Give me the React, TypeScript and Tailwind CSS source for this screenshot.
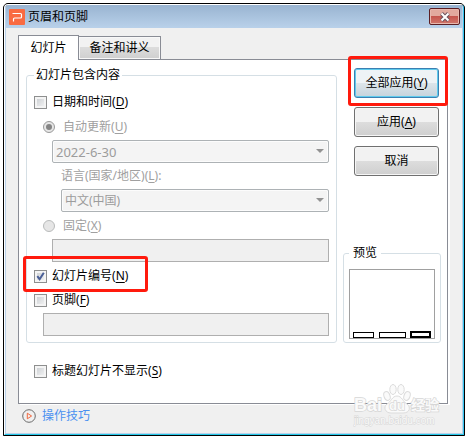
import { useState } from "react";
import type { ReactNode } from "react";

const FONT = "font-['Noto_Sans','Noto_Sans_CJK_SC',sans-serif]";

const DATE_FORMATS = ["2022-6-30"];
const LANGUAGES = ["中文(中国)"];

function Caption({ text, hotkey, tail = "" }: { text: string; hotkey: string; tail?: string }) {
  return (
    <span className="whitespace-nowrap">
      {text}(<span className="underline underline-offset-2">{hotkey}</span>){tail}
    </span>
  );
}

function CheckRow({ checked, onChange, children }: { checked: boolean; onChange: (v: boolean) => void; children: ReactNode }) {
  return (
    <label className="flex h-4 items-center gap-[5px]">
      <span className="relative flex">
        <input
          type="checkbox"
          checked={checked}
          onChange={e => onChange(e.target.checked)}
          className="h-[13px] w-[13px] appearance-none border border-[#8e8f8f] bg-linear-to-br from-[#c6cace] to-[#f8f8f8] shadow-[inset_0_0_0_2px_#f4f4f4]"
        />
        {checked && (
          <svg viewBox="0 0 13 13" className="pointer-events-none absolute inset-0 h-[13px] w-[13px]">
            <path d="M3.3 6.2 L5.6 9.2 L9.8 2.8" fill="none" stroke="#4a5f97" strokeWidth="2" />
          </svg>
        )}
      </span>
      {children}
    </label>
  );
}

function RadioRow({ value, checked, children }: { value: string; checked: boolean; children: ReactNode }) {
  return (
    <label className="ml-[9px] flex h-4 items-center gap-2 text-[#a0a0a0]">
      <span className="relative flex">
        <input
          type="radio"
          name="dateMode"
          value={value}
          defaultChecked={checked}
          disabled
          className="h-3 w-3 appearance-none rounded-full border border-[#b9bbbb] bg-[#e6e6e6] checked:border-[#9a9a9a]"
        />
        {checked && <span className="absolute inset-[3px] rounded-full bg-[#858585]" />}
      </span>
      {children}
    </label>
  );
}

function DropDown({ id, label, options, textSize }: { id: string; label?: string; options: string[]; textSize: string }) {
  return (
    <div className="relative">
      <select
        id={id}
        aria-label={label}
        disabled
        className={`block h-[23px] w-full appearance-none rounded-xs border border-[#adb2b5] bg-[#f4f4f4] px-[3px] leading-5 text-[#9c9c9c] opacity-100 shadow-[inset_0_0_0_1px_#fcfcfc] ${textSize}`}
      >
        {options.map(o => <option key={o}>{o}</option>)}
      </select>
      <svg viewBox="0 0 8 4" className="pointer-events-none absolute top-[9px] right-[5px] h-1 w-2">
        <path d="M0 0 H8 L4 4 Z" fill="#929292" />
      </svg>
    </div>
  );
}

function PushButton({ primary, children }: { primary?: boolean; children: ReactNode }) {
  return (
    <button
      type="button"
      className={`block h-[30px] w-full rounded-[3px] border text-xs ${
        primary
          ? "border-[#3c7fb1] bg-linear-to-b from-[#eef3f6] from-50% via-[#dde5ea] via-50% to-[#c5d3dc] shadow-[inset_0_0_0_1px_#5fcbed]"
          : "border-[#707070] bg-linear-to-b from-[#f2f2f2] from-50% via-[#dddddd] via-50% to-[#cfcfcf] shadow-[inset_0_0_0_1px_#f6f6f6]"
      }`}
    >
      {children}
    </button>
  );
}

function TitleBar() {
  return (
    <header className="flex h-[23px] items-center gap-[3px] bg-linear-to-b from-[#99b4d1] to-[#b9d1ea] pr-[2px] pl-[3px]">
      <svg viewBox="0 0 16 16" className="h-4 w-4">
        <rect width="16" height="16" rx="1" fill="#f96b42" />
        <path d="M3.5 4.5 H11.5 Q12.5 4.5 12.5 5.5 V8 Q12.5 9 11.5 9 H5.5 Q4.5 9 4.5 10 V12.5" fill="none" stroke="#fff" strokeWidth="1.2" />
      </svg>
      <h1 className="text-xs">页眉和页脚</h1>
      <button
        type="button"
        aria-label="关闭"
        className="ml-auto flex h-[17px] w-[31px] items-center justify-center rounded-xs border border-[#5c1f24] bg-linear-to-b from-[#e2a99e] from-45% via-[#c4524a] via-45% to-[#d0776d] shadow-[inset_0_0_0_1px_#e8b8ae]"
      >
        <svg viewBox="0 0 12 10" className="h-2.5 w-3">
          <path d="M2.5 1.5 L9.5 8.5 M9.5 1.5 L2.5 8.5" stroke="#6e5560" strokeWidth="4" />
          <path d="M2.5 1.5 L9.5 8.5 M9.5 1.5 L2.5 8.5" stroke="#fff" strokeWidth="2" />
        </svg>
      </button>
    </header>
  );
}

function Preview() {
  return (
    <fieldset className="min-w-0 rounded-[3px] border border-[#d5dfe5] px-[5px] pb-[3px]">
      <legend className="px-1 text-xs leading-4">预览</legend>
      <div className="mt-2 flex h-[70px] items-end justify-between border border-[#a0a0a0] px-[3px]">
        <div className="h-1.5 w-[21px] border border-black" />
        <div className="h-1.5 w-[27px] border border-black" />
        <div className="h-[7px] w-[21px] border-2 border-black" />
      </div>
    </fieldset>
  );
}

function Watermark() {
  return (
    <div aria-hidden="true" className="pointer-events-none absolute right-[19px] bottom-[6px] w-[91px]">
      <svg viewBox="0 0 91 45" className="block w-full">
        <g fill="#fafafa" stroke="#dcdcdc" strokeWidth="1">
          <ellipse cx="34" cy="13" rx="3" ry="4.5" transform="rotate(-20 34 13)" />
          <ellipse cx="40" cy="6.5" rx="3.2" ry="5" />
          <ellipse cx="48" cy="6.5" rx="3.2" ry="5" />
          <ellipse cx="54" cy="13" rx="3" ry="4.5" transform="rotate(20 54 13)" />
          <path d="M44 13 C39 13 38 19 34 21 C30 24 32 30 38 30 H50 C57 30 58 24 54 21 C50 19 49 13 44 13 Z" />
        </g>
        <g fill="#fafafa" stroke="#d6d6d6" strokeWidth="1.4" paintOrder="stroke" fontFamily="Liberation Sans, Noto Sans CJK SC, sans-serif">
          <text x="1" y="28" fontSize="18" fontWeight="bold">Bai</text>
          <text x="36" y="27" fontSize="13" fontWeight="bold">du</text>
          <text x="58" y="27" fontSize="14" fontWeight="bold">经验</text>
          <text x="1" y="41" fontSize="10" strokeWidth="1">jingyan.baidu.com</text>
        </g>
      </svg>
    </div>
  );
}

export default function App() {
  const [dateTime, setDateTime] = useState(false);
  const [slideNumber, setSlideNumber] = useState(true);
  const [footer, setFooter] = useState(false);
  const [hideOnTitle, setHideOnTitle] = useState(false);

  return (
    <div className={`bg-white pt-[3px] pr-[5px] pb-[2px] pl-[3px] text-xs leading-4 text-black ${FONT}`}>
      <div className="rounded-t-[5px] border border-black bg-black">
        <div className="relative overflow-hidden rounded-t-sm border border-t-white border-r-[#35c5ef] border-b-[#24c8e8] border-l-white">
          <div className="border-x border-b border-[#b9d1ea] bg-[#f0f0f0]">
            <TitleBar />

            <main className="px-3 pt-[7px]">
              <div role="tablist" className="flex items-end">
                <button type="button" role="tab" aria-selected="true" className="relative z-10 -mb-px h-[25px] w-[61px] border border-b-0 border-[#898c95] bg-white">
                  幻灯片
                </button>
                <button type="button" role="tab" aria-selected="false" className="h-[23px] w-[82px] border border-b-0 border-l-0 border-[#898c95] bg-linear-to-b from-[#f2f2f2] from-45% via-[#dddddd] via-45% to-[#cfcfcf] shadow-[inset_0_0_0_1px_#f8f8f8]">
                  备注和讲义
                </button>
              </div>

              <section role="tabpanel" className="mr-0.5 border border-[#898c95] bg-white pt-[7px] pr-1.5 pb-6 pl-[7px] shadow-[2px_1px_0_#fff]">
                <div className="flex gap-1.5">
                  <fieldset className="min-w-0 flex-1 rounded-[3px] border border-[#d5dfe5] pr-[7px] pb-1.5 pl-[7px]">
                    <legend className="px-[2px]">幻灯片包含内容</legend>

                    <div className="mt-[11px]">
                      <CheckRow checked={dateTime} onChange={setDateTime}>
                        <Caption text="日期和时间" hotkey="D" />
                      </CheckRow>
                    </div>
                    <div className="mt-[9px]">
                      <RadioRow value="auto" checked>
                        <Caption text="自动更新" hotkey="U" />
                      </RadioRow>
                    </div>
                    <div className="mt-[5px] ml-[18px] space-y-[5px]">
                      <DropDown id="dateFormat" label="日期格式" options={DATE_FORMATS} textSize="text-[13px]" />
                      <label htmlFor="language" className="ml-[9px] block h-4 text-[#a0a0a0]">
                        <Caption text="语言(国家/地区)" hotkey="L" tail=":" />
                      </label>
                      <div className="ml-[9px]">
                        <DropDown id="language" options={LANGUAGES} textSize="text-xs" />
                      </div>
                    </div>
                    <div className="mt-1.5">
                      <RadioRow value="fixed" checked={false}>
                        <Caption text="固定" hotkey="X" />
                      </RadioRow>
                    </div>
                    <div className="mt-[5px] ml-[18px]">
                      <input type="text" aria-label="固定" disabled className="block h-[23px] w-full border border-[#afafaf] bg-[#f0f0f0] px-1" />
                    </div>

                    <div className="relative mt-1.5">
                      <CheckRow checked={slideNumber} onChange={setSlideNumber}>
                        <Caption text="幻灯片编号" hotkey="N" />
                      </CheckRow>
                      <div className="pointer-events-none absolute -top-3 -left-[11px] h-9 w-[125px] rounded-[3px] border-3 border-[#ff1a0d]" />
                    </div>
                    <div className="mt-2">
                      <CheckRow checked={footer} onChange={setFooter}>
                        <Caption text="页脚" hotkey="F" />
                      </CheckRow>
                    </div>
                    <div className="mt-[5px] ml-[9px]">
                      <input type="text" aria-label="页脚" disabled className="block h-[23px] w-full border border-[#afafaf] bg-[#f0f0f0] px-1" />
                    </div>
                  </fieldset>

                  <div className="flex w-[98px] flex-col justify-between pt-px">
                    <div className="ml-[11px] w-[85px] space-y-[9px]">
                      <div className="relative">
                        <PushButton primary>
                          <Caption text="全部应用" hotkey="Y" />
                        </PushButton>
                        <div className="pointer-events-none absolute -top-3 -right-[9px] -bottom-2 -left-1.5 z-20 rounded-[3px] border-3 border-[#ff1a0d]" />
                      </div>
                      <PushButton>
                        <Caption text="应用" hotkey="A" />
                      </PushButton>
                      <PushButton>取消</PushButton>
                    </div>
                    <Preview />
                  </div>
                </div>

                <div className="mt-5 ml-2">
                  <CheckRow checked={hideOnTitle} onChange={setHideOnTitle}>
                    <Caption text="标题幻灯片不显示" hotkey="S" />
                  </CheckRow>
                </div>
              </section>
            </main>

            <footer className="flex items-center px-4 pt-1 pb-[9px]">
              <a href="#tips" className="flex items-center gap-1.5 text-[#4a90f0]">
                <svg viewBox="0 0 14 14" className="h-3.5 w-3.5" fill="none">
                  <circle cx="7" cy="7" r="6.3" stroke="#6b6b6b" />
                  <path d="M5.3 4.2 L9.6 7 L5.3 9.8 Z" stroke="#f0683f" />
                </svg>
                操作技巧
              </a>
            </footer>
          </div>
          <Watermark />
        </div>
      </div>
    </div>
  );
}
